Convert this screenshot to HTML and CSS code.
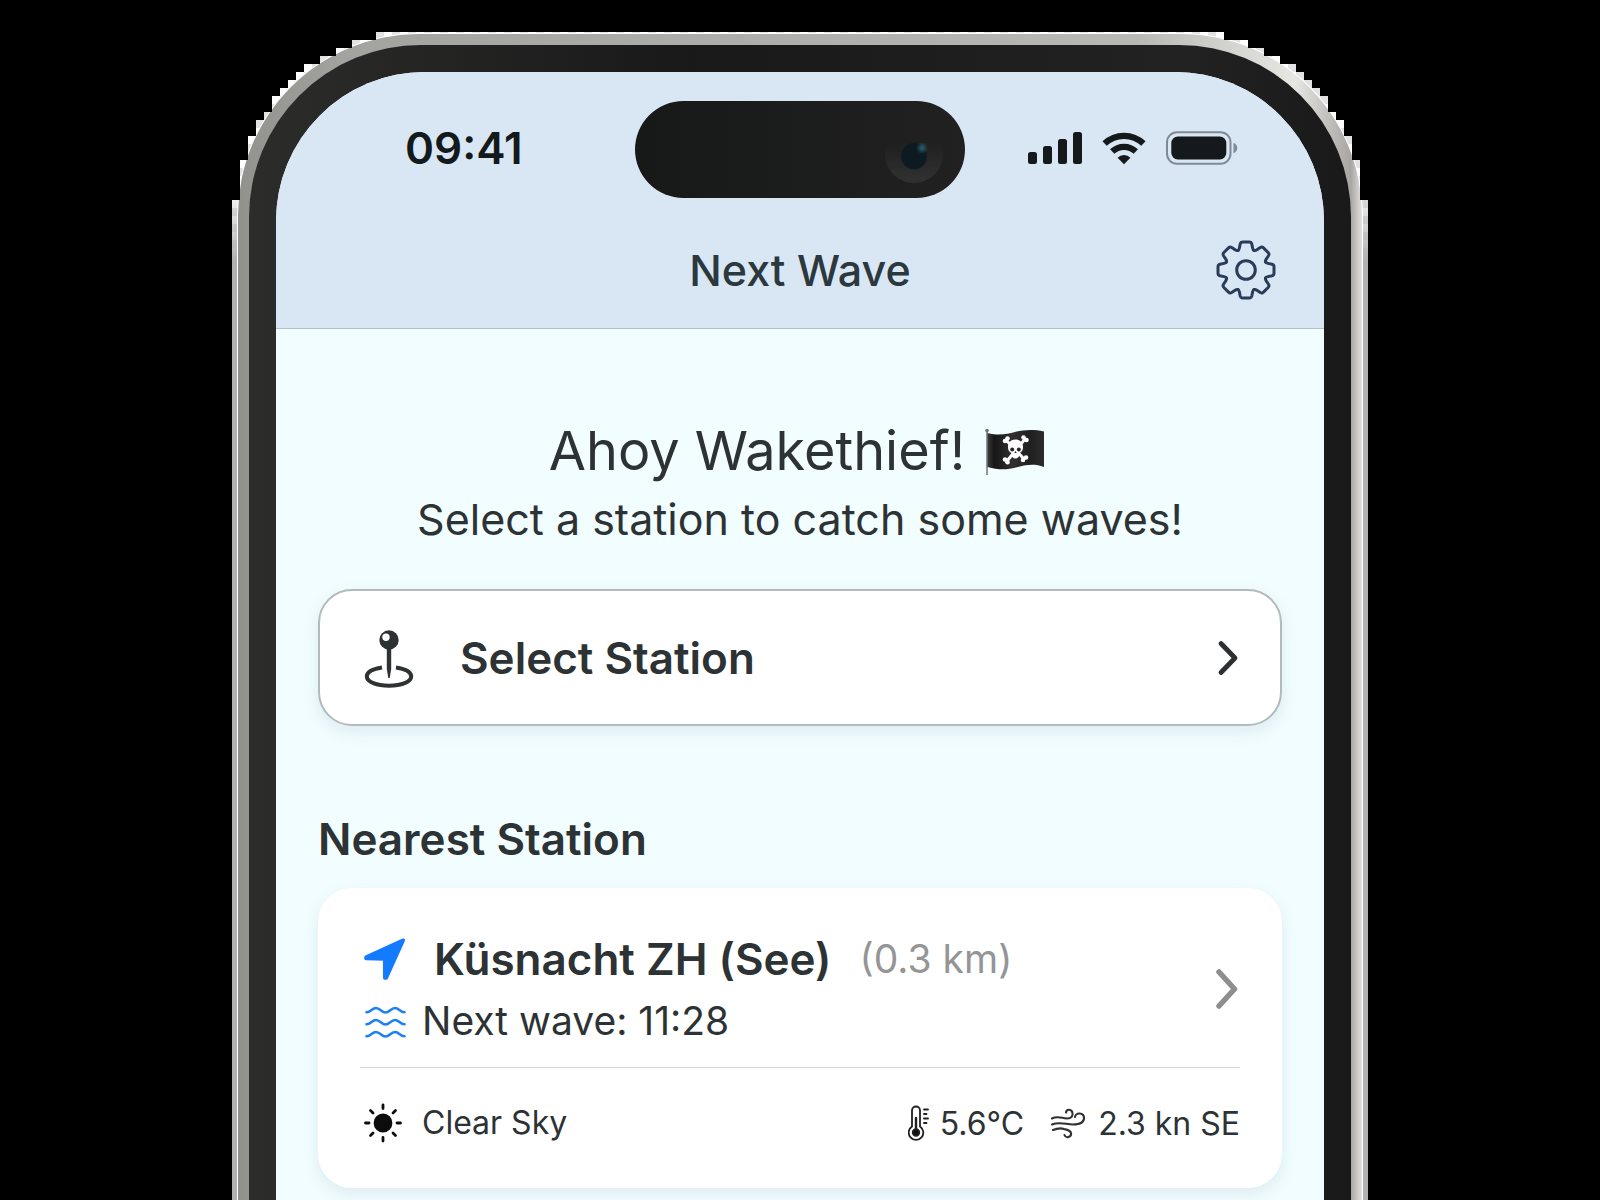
FILE: index.html
```html
<!DOCTYPE html>
<html lang="en">
<head>
<meta charset="utf-8">
<meta name="viewport" content="width=device-width, initial-scale=1">
<title>Next Wave</title>
<link rel="stylesheet" href="styles.css">
</head>
<body>
<div class="phone">
  <div class="frame">
    <div class="bezel">
      <div class="screen">
        <header class="header">
          <div class="status">
            <time class="clock">09:41</time>
            <div class="island"><span class="lens"></span></div>
            <div class="indicators">
              <svg width="54" height="34" viewBox="0 0 54 34" fill="#15191b" aria-label="Signal">
                <rect x="0" y="21" width="9" height="12" rx="2.5"/>
                <rect x="15" y="15" width="9" height="18" rx="2.5"/>
                <rect x="30" y="8" width="9" height="25" rx="2.5"/>
                <rect x="45" y="1" width="9" height="32" rx="2.5"/>
              </svg>
              <svg width="44" height="34" viewBox="0 0 44 34" aria-label="Wi-Fi">
                <g fill="none" stroke="#15191b" stroke-width="6.2">
                  <path d="M2.6 12.6a28 28 0 0 1 38.8 0"/>
                  <path d="M10.2 20.6a17 17 0 0 1 23.6 0"/>
                </g>
                <path d="M22 33.2l-6.4-6.5a9.2 9.2 0 0 1 12.8 0z" fill="#15191b"/>
              </svg>
              <svg width="72" height="34" viewBox="0 0 72 34" aria-label="Battery">
                <rect x="1" y="1.2" width="63.5" height="31.6" rx="10" fill="none" stroke="#7f8a96" stroke-width="2"/>
                <rect x="5.3" y="5.5" width="55" height="23" rx="6.5" fill="#15191b"/>
                <path d="M67.5 11.8c5 2 5 8.600 0 10.600z" fill="#7f8a96"/>
              </svg>
            </div>
          </div>
          <nav class="nav">
            <span class="title">Next Wave</span>
            <button class="settings" type="button" aria-label="Settings">
              <svg width="60" height="60" viewBox="-30 -30 60 60" fill="none" stroke="#2b3b5a" stroke-width="3" stroke-linecap="round">
                <defs><path id="tooth" d="M-8.1-19.500Q-7-20-6.600-22L-5.800-26Q-5.300-28-3.300-28H3.300Q5.300-28 5.800-26L6.600-22Q7-20 8.100-19.500"/></defs>
                <use href="#tooth"/>
                <use href="#tooth" transform="rotate(45)"/>
                <use href="#tooth" transform="rotate(90)"/>
                <use href="#tooth" transform="rotate(135)"/>
                <use href="#tooth" transform="rotate(180)"/>
                <use href="#tooth" transform="rotate(225)"/>
                <use href="#tooth" transform="rotate(270)"/>
                <use href="#tooth" transform="rotate(315)"/>
                <circle r="9.300"/>
              </svg>
            </button>
          </nav>
        </header>

        <main class="main">
          <h1 class="greeting">
            <span>Ahoy Wakethief!</span>
            <svg class="flag" width="60" height="50" viewBox="0 0 60 50" aria-label="Pirate flag">
              <defs><linearGradient id="cloth"><stop offset="0" stop-color="#3a3a3a"/><stop offset=".12" stop-color="#161616"/><stop offset=".45" stop-color="#332f2f"/><stop offset=".75" stop-color="#202020"/><stop offset="1" stop-color="#2c2c2c"/></linearGradient></defs>
              <g transform="translate(0 2)">
              <path d="M2 3v44" stroke="#8e9799" stroke-width="2"/>
              <circle cx="2" cy="2.500" r="1.800" fill="#6d7577"/>
              <path d="M2.500 5C14 8 22 6 30 4S48 1 59 3.500V39C49 35 40 37 31 39.500S13 42 2.500 39z" fill="url(#cloth)"/>
              <g stroke="#fff" stroke-width="3" stroke-linecap="round"><path d="M21 12l18 19M40 11L22 33"/></g>
              <g fill="#fff">
                <circle cx="20" cy="13" r="2.300"/><circle cx="22.500" cy="10.500" r="2.300"/>
                <circle cx="38.500" cy="9.500" r="2.300"/><circle cx="41.500" cy="12" r="2.300"/>
                <circle cx="20" cy="31.500" r="2.300"/><circle cx="22.500" cy="34.300" r="2.300"/>
                <circle cx="38" cy="32" r="2.300"/><circle cx="41" cy="29.500" r="2.300"/>
                <path d="M30.500 11.500c-5 0-7.500 3.500-7.500 7.500 0 3 1 5 3.500 6 0 4 1.500 5.500 4 5.500s4-1.500 4-5.500c2.500-1 3.500-3 3.500-6 0-4-2.500-7.500-7.500-7.500z"/>
              </g>
              <g fill="#262424"><circle cx="27.200" cy="21.500" r="2"/><circle cx="33.800" cy="21.500" r="2"/><path d="M30.500 23l1.200 2h-2.400z"/></g>
              </g>
            </svg>
          </h1>
          <p class="lead">Select a station to catch some waves!</p>

          <button class="select" type="button">
            <svg width="50" height="60" viewBox="0 0 50 60" aria-hidden="true">
              <g transform="translate(0 1)">
              <circle cx="25" cy="11" r="9.700" fill="#2f3233"/>
              <circle cx="22" cy="8.300" r="3.700" fill="#fff"/>
              <path d="M22.800 19h4.400V40L25.700 49h-1.400L22.800 40z" fill="#2f3233"/>
              <path d="M18 38.500C8 40 2.800 43.500 2.800 47.500c0 5.500 10 9.200 22.200 9.200s22.200-3.700 22.200-9.200c0-4-5.200-7.500-15.200-9" fill="none" stroke="#2f3233" stroke-width="4"/>
              </g>
            </svg>
            <span class="select-label">Select Station</span>
            <svg width="22" height="36" viewBox="0 0 22 36" fill="none" stroke="#2d2f30" stroke-width="4.800" stroke-linecap="round" stroke-linejoin="round" aria-hidden="true"><path d="M4 3.500L18 18 4 32.500"/></svg>
          </button>

          <h2 class="section-title">Nearest Station</h2>
          <article class="card">
            <div class="departure">
              <div class="details">
                <div class="row name-row">
                  <svg width="42" height="42" viewBox="0 0 42 42" fill="#147bff" stroke="#147bff" stroke-width="3.500" stroke-linejoin="round" aria-hidden="true"><path d="M39.300 2.200L2 19.200V20.500L20.700 21V40H22.200z"/></svg>
                  <h3 class="name">Küsnacht ZH (See)</h3>
                  <span class="distance">(0.3 km)</span>
                </div>
                <div class="row">
                  <svg width="42" height="42" viewBox="0 0 42 42" fill="none" stroke="#1f80f5" stroke-width="2.600" stroke-linecap="round" aria-hidden="true">
                    <path id="ripple" d="M2.500 12.300C7 12.300 8 8 12 8s5.500 4.500 9.500 4.500S27 8 31 8s5 4.300 9.500 4.300"/>
                    <use href="#ripple" y="12"/><use href="#ripple" y="24"/>
                  </svg>
                  <span class="next">Next wave: 11:28</span>
                </div>
              </div>
              <svg width="24" height="42" viewBox="0 0 24 42" fill="none" stroke="#8e8e8f" stroke-width="5.500" stroke-linecap="round" stroke-linejoin="round" aria-hidden="true"><path d="M3 3L18.500 20 3 37"/></svg>
            </div>
            <div class="weather">
              <div class="row">
                <svg width="42" height="42" viewBox="0 0 42 42" stroke="#0d0d0d" stroke-width="2.800" stroke-linecap="round" aria-hidden="true"><circle cx="19" cy="21" r="8" fill="#0d0d0d"/><path d="M19 3v3.500M19 35.500V39M1.500 21H5M33 21h3.500M6.500 8.500l2.500 2.500M29 31l2.500 2.500M31.500 8.500L29 11M9 31l-2.500 2.500"/></svg>
                <span>Clear Sky</span>
              </div>
              <div class="readings">
                <span class="reading temperature">
                  <svg width="22" height="36" viewBox="0 0 22 36" fill="none" stroke="#202020" stroke-width="1.800" stroke-linecap="round" aria-hidden="true"><path d="M4 21.500V5.500a4 4 0 0 1 8 0v16a7.300 7.300 0 1 1-8 0z"/><path d="M8 13v14" stroke-width="2.400"/><circle cx="8" cy="27.500" r="3.300" fill="#111"/><path d="M16 4.500h4M16 9h2.500M16 13.500h4M16 18h2.500"/></svg>
                  <span>5.6°C</span>
                </span>
                <span class="reading wind">
                  <svg width="36" height="32" viewBox="0 0 36 32" fill="none" stroke="#303030" stroke-width="2.100" stroke-linecap="round" aria-hidden="true"><path d="M2 11.500c6-3 10 0 15 0 4.500 0 6-2.500 5.500-5.500-.5-4-6-4.500-6.500-.5"/><path d="M2 17.500c8-3 14 0 21 0 8 0 11-2.500 11-6.500 0-5.500-8.500-6-9-1"/><path d="M3 23c5-2 8-2 11-1 3 .8 6 .8 7 4 .8 4-5 6-6.500 2"/></svg>
                  <span>2.3 kn SE</span>
                </span>
              </div>
            </div>
          </article>
        </main>
      </div>
    </div>
  </div>
</div>
</body>
</html>
```
FILE: styles.css
```css
* { box-sizing: border-box; }

body {
  margin: 0;
  min-height: 100vh;
  display: flex;
  justify-content: center;
  padding-top: 32px;
  background: #000;
  color: #2d3335;
  font-family: Inter, "Liberation Sans", sans-serif;
}

h1, h2, h3, p { margin: 0; font-weight: 400; }
svg { display: block; flex: none; }
button { font: inherit; color: inherit; cursor: pointer; }

/* Device shell: pale stepped fringe, metal frame, dark bezel, screen */
.phone {
  width: 71%;
  min-width: 1080px;
  display: flex;
  padding: 1px 5px 0;
  background:
    linear-gradient(#fff0 150px, #b0b0b0 230px),
    repeating-conic-gradient(#fff 0 25%, #e2e2e2 0 50%) 0 0 / 16px 16px;
  clip-path: polygon(
    0 100%, 0 168px, 8px 168px, 8px 128px, 16px 128px, 16px 104px, 24px 104px, 24px 88px,
    32px 88px, 32px 80px, 40px 80px, 40px 64px, 48px 64px, 48px 56px, 56px 56px, 56px 48px,
    64px 48px, 64px 40px, 72px 40px, 72px 32px, 88px 32px, 88px 24px, 104px 24px, 104px 16px,
    120px 16px, 120px 8px, 144px 8px, 144px 0,
    calc(100% - 144px) 0, calc(100% - 144px) 8px, calc(100% - 120px) 8px, calc(100% - 120px) 16px,
    calc(100% - 104px) 16px, calc(100% - 104px) 24px, calc(100% - 88px) 24px, calc(100% - 88px) 32px,
    calc(100% - 72px) 32px, calc(100% - 72px) 40px, calc(100% - 64px) 40px, calc(100% - 64px) 48px,
    calc(100% - 56px) 48px, calc(100% - 56px) 56px, calc(100% - 48px) 56px, calc(100% - 48px) 64px,
    calc(100% - 40px) 64px, calc(100% - 40px) 80px, calc(100% - 32px) 80px, calc(100% - 32px) 88px,
    calc(100% - 24px) 88px, calc(100% - 24px) 104px, calc(100% - 16px) 104px, calc(100% - 16px) 128px,
    calc(100% - 8px) 128px, calc(100% - 8px) 168px, 100% 168px, 100% 100%);
}

.frame {
  flex: 1;
  display: flex;
  padding: 11px 11px 0;
  border: 1px solid #fff;
  border-bottom: 0;
  border-radius: 182px 182px 0 0;
  background: linear-gradient(90deg, #91918e 0, #a3a3a0 10%, #b2b2b0 60%, #b8b8b5 80%, #e6e6e3 94%, #a8a6a3 99%, #e2e1df 100%);
}

.bezel {
  flex: 1;
  display: flex;
  padding: 27px 27px 0;
  border-radius: 172px 172px 0 0;
  background: linear-gradient(90deg, #2c2c2b 0, #191919 40%, #222 85%, #191919 100%);
}

.screen {
  flex: 1;
  border-radius: 149px 149px 0 0;
  overflow: hidden;
  background: #f1fdff;
}

.header {
  padding-top: 29px;
  border-bottom: 1px solid #b4c0cb;
  background: #d9e7f4;
}

.status {
  display: grid;
  grid-template-columns: 1fr 330px 1fr;
  align-items: center;
}

.clock {
  padding: 0 0 4px 129px;
  font-size: 44px;
  line-height: 56px;
  font-weight: 600;
  color: #14191b;
}

.island {
  height: 97px;
  display: flex;
  align-items: center;
  justify-content: flex-end;
  padding: 8px 22px 0;
  border-radius: 49px;
  background: linear-gradient(90deg, #171818, #212121);
}

.lens {
  width: 58px;
  height: 58px;
  border-radius: 50%;
  background:
    radial-gradient(circle at 37px 23px, #2a6478 0, #2a647800 6px),
    radial-gradient(circle at 50% 54%, #0d1a21 12px, #0d1a2100 14px),
    linear-gradient(#20202000 30%, #303030 90%);
}

.indicators {
  display: flex;
  gap: 20px;
  justify-content: flex-end;
  padding: 0 86px 4px 0;
}

.nav {
  display: grid;
  grid-template-columns: 1fr auto 1fr;
  align-items: center;
  height: 130px;
  padding: 14px 48px 0;
}

.title {
  grid-column: 2;
  font-size: 43px;
  line-height: 56px;
  font-weight: 500;
  color: #2b383e;
}

.settings {
  justify-self: end;
  padding: 0;
  border: 0;
  background: none;
}

.main {
  display: flex;
  flex-direction: column;
  padding: 87px 42px 12px;
}

.greeting {
  display: flex;
  align-items: center;
  justify-content: center;
  gap: 20px;
  padding-right: 6px;
  font-size: 54px;
  line-height: 70px;
}

.lead {
  font-size: 43px;
  line-height: 66px;
  text-align: center;
}

.select {
  display: flex;
  align-items: center;
  gap: 46px;
  height: 137px;
  margin-top: 37px;
  padding: 0 41px 0 44px;
  border: 2px solid #b3babd;
  border-radius: 34px;
  background: #fff;
  box-shadow: 0 6px 16px #5064781c;
}

.select-label {
  flex: 1;
  font-size: 44px;
  font-weight: 600;
  text-align: left;
}

.section-title {
  margin-top: 85px;
  font-size: 44px;
  line-height: 56px;
  font-weight: 600;
}

.card {
  margin-top: 21px;
  padding: 40px 42px 10px;
  border-radius: 34px;
  background: #fff;
  box-shadow: 0 6px 16px #5064781c;
}

.departure {
  display: flex;
  align-items: center;
  justify-content: space-between;
  padding-bottom: 15px;
  border-bottom: 1px solid #d3d5d6;
}

.row {
  display: flex;
  align-items: center;
  gap: 16px;
  padding-left: 4px;
  line-height: 62px;
}

.name-row { gap: 28px; }
.name { font-size: 44px; font-weight: 600; }
.distance { font-size: 39px; color: #949596; }
.next { font-size: 39px; }

.weather {
  display: flex;
  align-items: center;
  justify-content: space-between;
  height: 110px;
  font-size: 32px;
}

.readings { display: flex; gap: 26px; }
.reading { display: flex; align-items: center; gap: 10px; }
.wind { gap: 12px; }
```
